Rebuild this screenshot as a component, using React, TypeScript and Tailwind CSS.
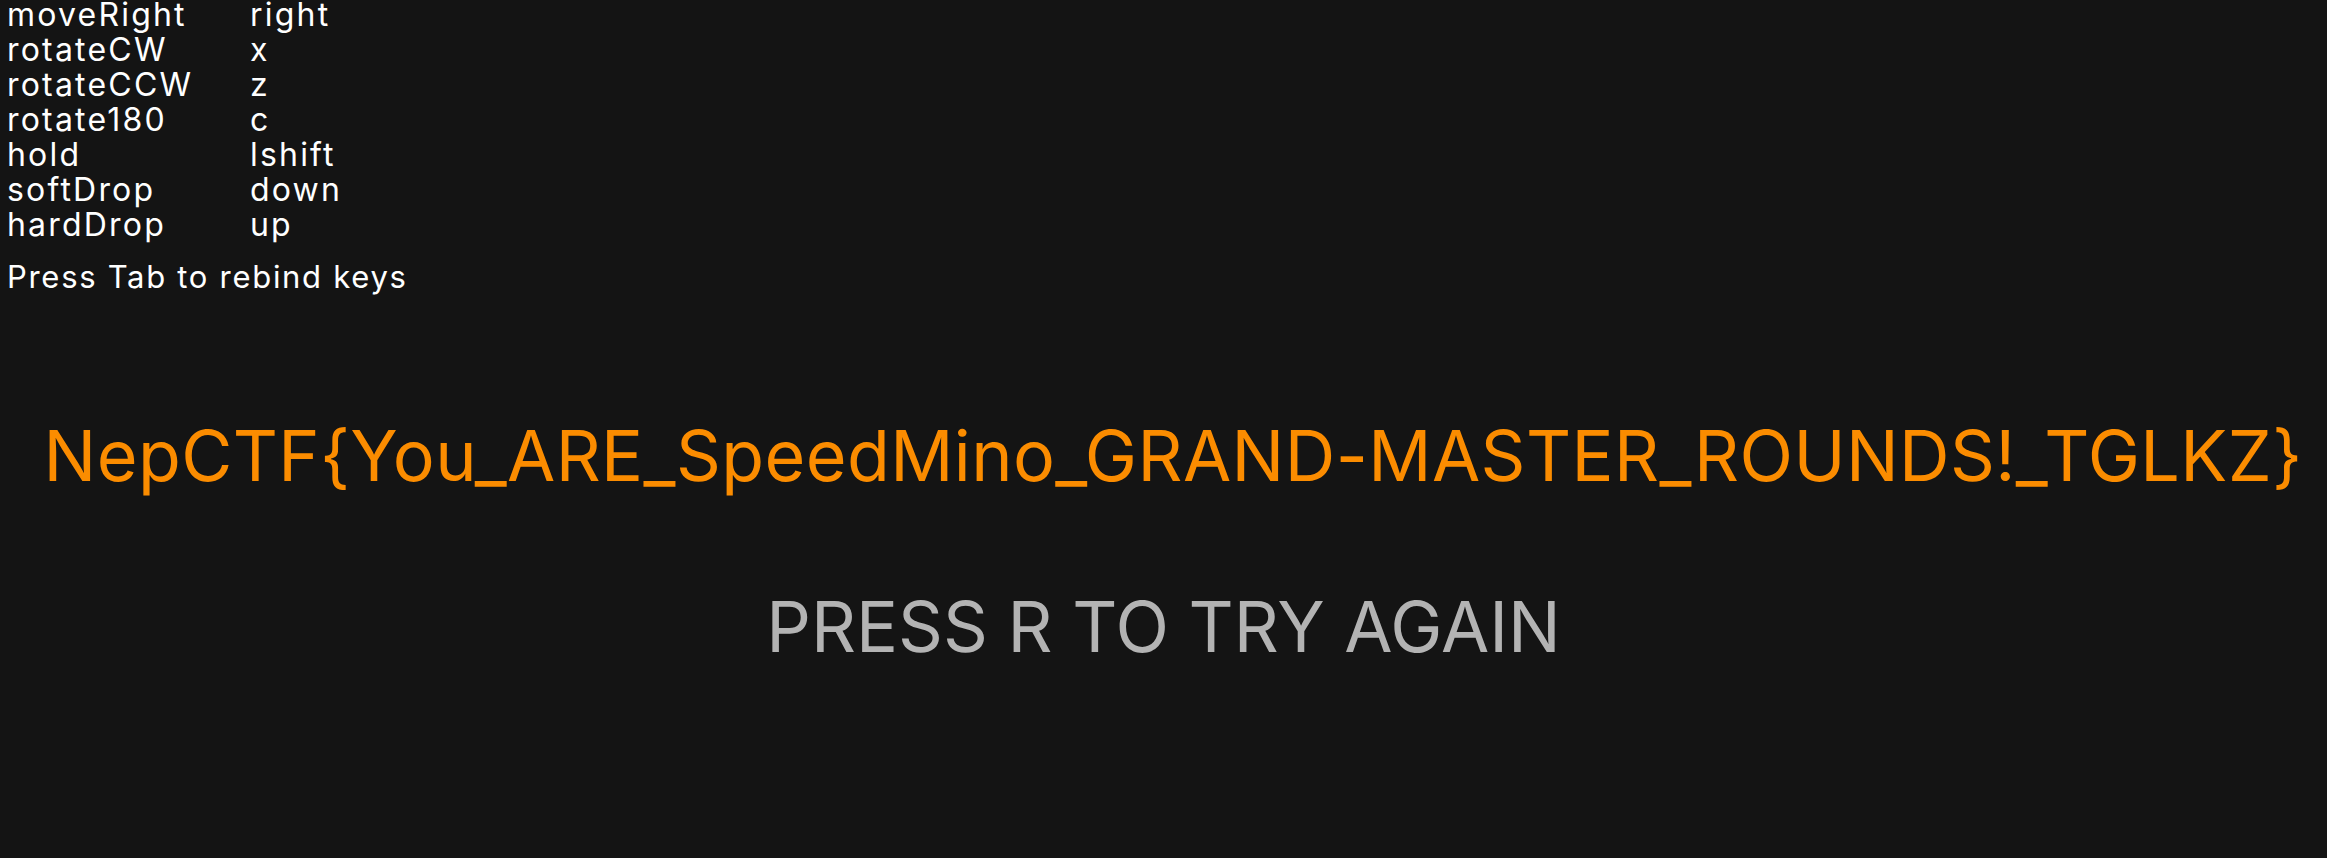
const bindings: [string, string][] = [
  ["moveRight", "right"],
  ["rotateCW", "x"],
  ["rotateCCW", "z"],
  ["rotate180", "c"],
  ["hold", "lshift"],
  ["softDrop", "down"],
  ["hardDrop", "up"],
];

export default function App() {
  return (
    <div
      className="h-[858px] w-full overflow-hidden bg-[#141414] text-white"
      style={{ fontFamily: "Inter, 'Liberation Sans', sans-serif" }}
    >
      <div className="-mt-[3px] pl-[7px]">
        {bindings.map(([action, key]) => (
          <div
            key={action}
            className="flex h-[35px] items-center text-[32px] leading-[35px] tracking-[2.2px]"
          >
            <span className="w-[243px]">{action}</span>
            <span>{key}</span>
          </div>
        ))}
        <p className="mt-[17px] text-[31px] leading-[35px] tracking-[1.7px]">Press Tab to rebind keys</p>
      </div>

      <div className="mt-[127px] flex justify-center pl-[19px]">
        <p className="text-[70px] leading-none whitespace-nowrap tracking-[0.4px] text-[#fb8c00]">
          NepCTF{"{"}You_ARE_SpeedMino_GRAND-MASTER_ROUNDS!_TGLKZ{"}"}
        </p>
      </div>

      <div className="mt-[101px] flex justify-center">
        <p className="text-[70px] leading-none text-[#b3b3b3]">PRESS R TO TRY AGAIN</p>
      </div>
    </div>
  );
}
